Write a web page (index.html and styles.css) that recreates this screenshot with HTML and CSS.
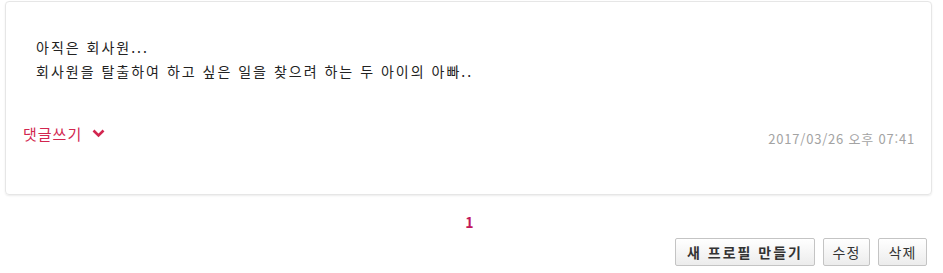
FILE: index.html
```html
<!DOCTYPE html>
<html lang="ko">
<head>
    <meta charset="UTF-8">
    <title>프로필</title>
    <link rel="stylesheet" href="styles.css">
</head>
<body>

<div class="card">
    <div class="content">
        아직은 회사원...<br>
        회사원을 탈출하여 하고 싶은 일을 찾으려 하는 두 아이의 아빠..
    </div>
    <div class="card-foot">
        <a class="comment-link" href="#">댓글쓰기
            <svg width="13" height="9" viewBox="0 0 13 9"><path d="M1.5 1.5 L6.5 6.5 L11.5 1.5" fill="none" stroke="#d2264f" stroke-width="2.6"/></svg>
        </a>
        <span class="date">2017/03/26 오후 07:41</span>
    </div>
</div>

<div class="pager"><a href="#">1</a></div>

<div class="actions">
    <button class="btn strong">새 프로필 만들기</button>
    <button class="btn edit">수정</button>
    <button class="btn del">삭제</button>
</div>

</body>
</html>
```

FILE: styles.css
```css
body {
    margin: 0;
    padding: 0 11px 0 5px;
    font-family: "Noto Sans CJK KR", "Noto Sans", sans-serif;
    font-size: 13px;
    color: #222;
    background: #fff;
}
.card {
    margin-top: 1px;
    border: 1px solid #e6e6e6;
    border-radius: 4px;
    box-shadow: 0 1px 2px rgba(0, 0, 0, 0.08);
    height: 194px;
    box-sizing: border-box;
}
.content {
    padding: 33px 0 0 30px;
    font-size: 14px;
    letter-spacing: 2px;
    line-height: 24px;
}
.card-foot {
    display: flex;
    justify-content: space-between;
    align-items: flex-start;
    padding: 40px 16px 0 17px;
}
.comment-link {
    color: #d2264f;
    text-decoration: none;
    font-size: 15px;
    letter-spacing: 1px;
    display: flex;
    align-items: center;
    gap: 10px;
}
.date {
    color: #a3a3a3;
    font-size: 13px;
    letter-spacing: 0.8px;
    padding-top: 6px;
}
.pager {
    text-align: center;
    margin-top: 17px;
    margin-left: 2px;
}
.pager a {
    color: #c2185b;
    font-weight: bold;
    text-decoration: none;
    font-size: 14px;
}
.actions {
    display: flex;
    justify-content: flex-end;
    gap: 8px;
    margin-top: 6px;
    margin-right: 5px;
}
.btn {
    font-family: "Noto Sans CJK KR", sans-serif;
    font-size: 14px;
    letter-spacing: 1px;
    color: #333;
    background: linear-gradient(#fff, #ececec);
    border: 1px solid #c4c4c4;
    border-radius: 2px;
    height: 28px;
    padding: 0;
    cursor: pointer;
}
.btn.strong {
    font-weight: bold;
    letter-spacing: 2px;
    width: 140px;
}
.btn.edit {
    width: 47px;
}
.btn.del {
    width: 49px;
}
```
